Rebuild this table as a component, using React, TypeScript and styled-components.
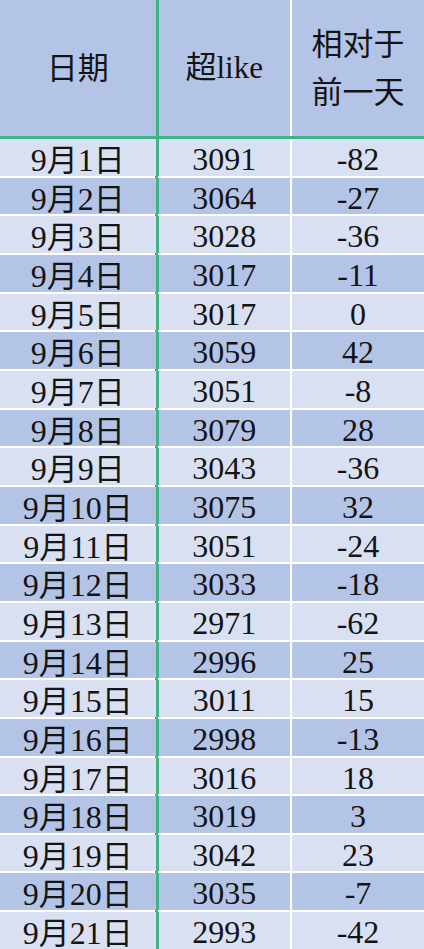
import React from "react";
import styled, { createGlobalStyle } from "styled-components";

const GlobalStyle = createGlobalStyle`
    html, body {
        margin: 0;
        padding: 0;
        background: #ffffff;
    }
    body {
        font-family: "Liberation Serif", "Times New Roman", serif;
        color: #141414;
    }
`;

const GREEN = "#3fb28a";
const LIGHT = "#d9e0f2";
const DARK = "#b4c4e7";
const SERIF = `"Liberation Serif", "Times New Roman", serif`;
const CJK = `"Noto Sans CJK SC", "Noto Sans CJK JP", sans-serif`;

const Sheet = styled.div`
    width: 424px;
    height: 949px;
    overflow: hidden;
    display: flex;
    flex-direction: column;
    background: #ffffff;
`;

const HeaderRow = styled.div`
    display: grid;
    grid-template-columns: 158.5px 133.5px 1fr;
    height: 139px;
    flex-shrink: 0;
    border-bottom: 3px solid ${GREEN};
    box-sizing: border-box;
    background: ${DARK};
`;

const HeadCell = styled.div<{ $edge?: "green" | "white" }>`
    display: flex;
    flex-direction: column;
    align-items: center;
    justify-content: center;
    box-sizing: border-box;
    font-family: ${SERIF};
    font-size: 31px;
    line-height: 48px;
    padding-bottom: 4px;
    border-right: ${(p) =>
        p.$edge === "green"
            ? `3px solid ${GREEN}`
            : p.$edge === "white"
            ? "2px solid #ffffff"
            : "none"};
`;

const Han = styled.span`
    font-family: ${CJK};
    font-size: 31px;
`;

const Row = styled.div<{ $first: boolean }>`
    display: grid;
    grid-template-columns: 158.5px 133.5px 1fr;
    flex-shrink: 0;
    height: ${(p) => (p.$first ? "36.67px" : "38.67px")};
    padding-top: ${(p) => (p.$first ? "0" : "2px")};
    box-sizing: border-box;
    background: linear-gradient(
        to right,
        #ffffff 155.5px,
        ${GREEN} 155.5px,
        ${GREEN} 158.5px,
        #ffffff 158.5px
    );
`;

const Cell = styled.div<{ $dark: boolean; $edge?: "green" | "white" }>`
    display: block;
    text-align: center;
    box-sizing: border-box;
    background: ${(p) => (p.$dark ? DARK : LIGHT)};
    font-family: ${SERIF};
    font-size: 32px;
    line-height: 34px;
    padding-top: 3px;
    white-space: nowrap;
    border-right: ${(p) =>
        p.$edge === "green"
            ? `3px solid ${GREEN}`
            : p.$edge === "white"
            ? "2px solid #ffffff"
            : "none"};

    ${Han} {
        line-height: 1;
    }
`;

const data: [number, number][] = [
    [3091, -82],
    [3064, -27],
    [3028, -36],
    [3017, -11],
    [3017, 0],
    [3059, 42],
    [3051, -8],
    [3079, 28],
    [3043, -36],
    [3075, 32],
    [3051, -24],
    [3033, -18],
    [2971, -62],
    [2996, 25],
    [3011, 15],
    [2998, -13],
    [3016, 18],
    [3019, 3],
    [3042, 23],
    [3035, -7],
    [2993, -42],
];

export default function App() {
    return (
        <>
            <GlobalStyle />
            <Sheet>
                <HeaderRow>
                    <HeadCell $edge="green">
                        <Han>日期</Han>
                    </HeadCell>
                    <HeadCell $edge="white">
                        <span>
                            <Han>超</Han>like
                        </span>
                    </HeadCell>
                    <HeadCell>
                        <Han>相对于</Han>
                        <Han>前一天</Han>
                    </HeadCell>
                </HeaderRow>
                {data.map(([likes, diff], i) => {
                    const dark = i % 2 === 1;
                    return (
                        <Row key={i} $first={i === 0}>
                            <Cell $dark={dark} $edge="green">
                                9<Han>月</Han>
                                {i + 1}
                                <Han>日</Han>
                            </Cell>
                            <Cell $dark={dark} $edge="white">
                                {likes}
                            </Cell>
                            <Cell $dark={dark}>{diff}</Cell>
                        </Row>
                    );
                })}
            </Sheet>
        </>
    );
}
